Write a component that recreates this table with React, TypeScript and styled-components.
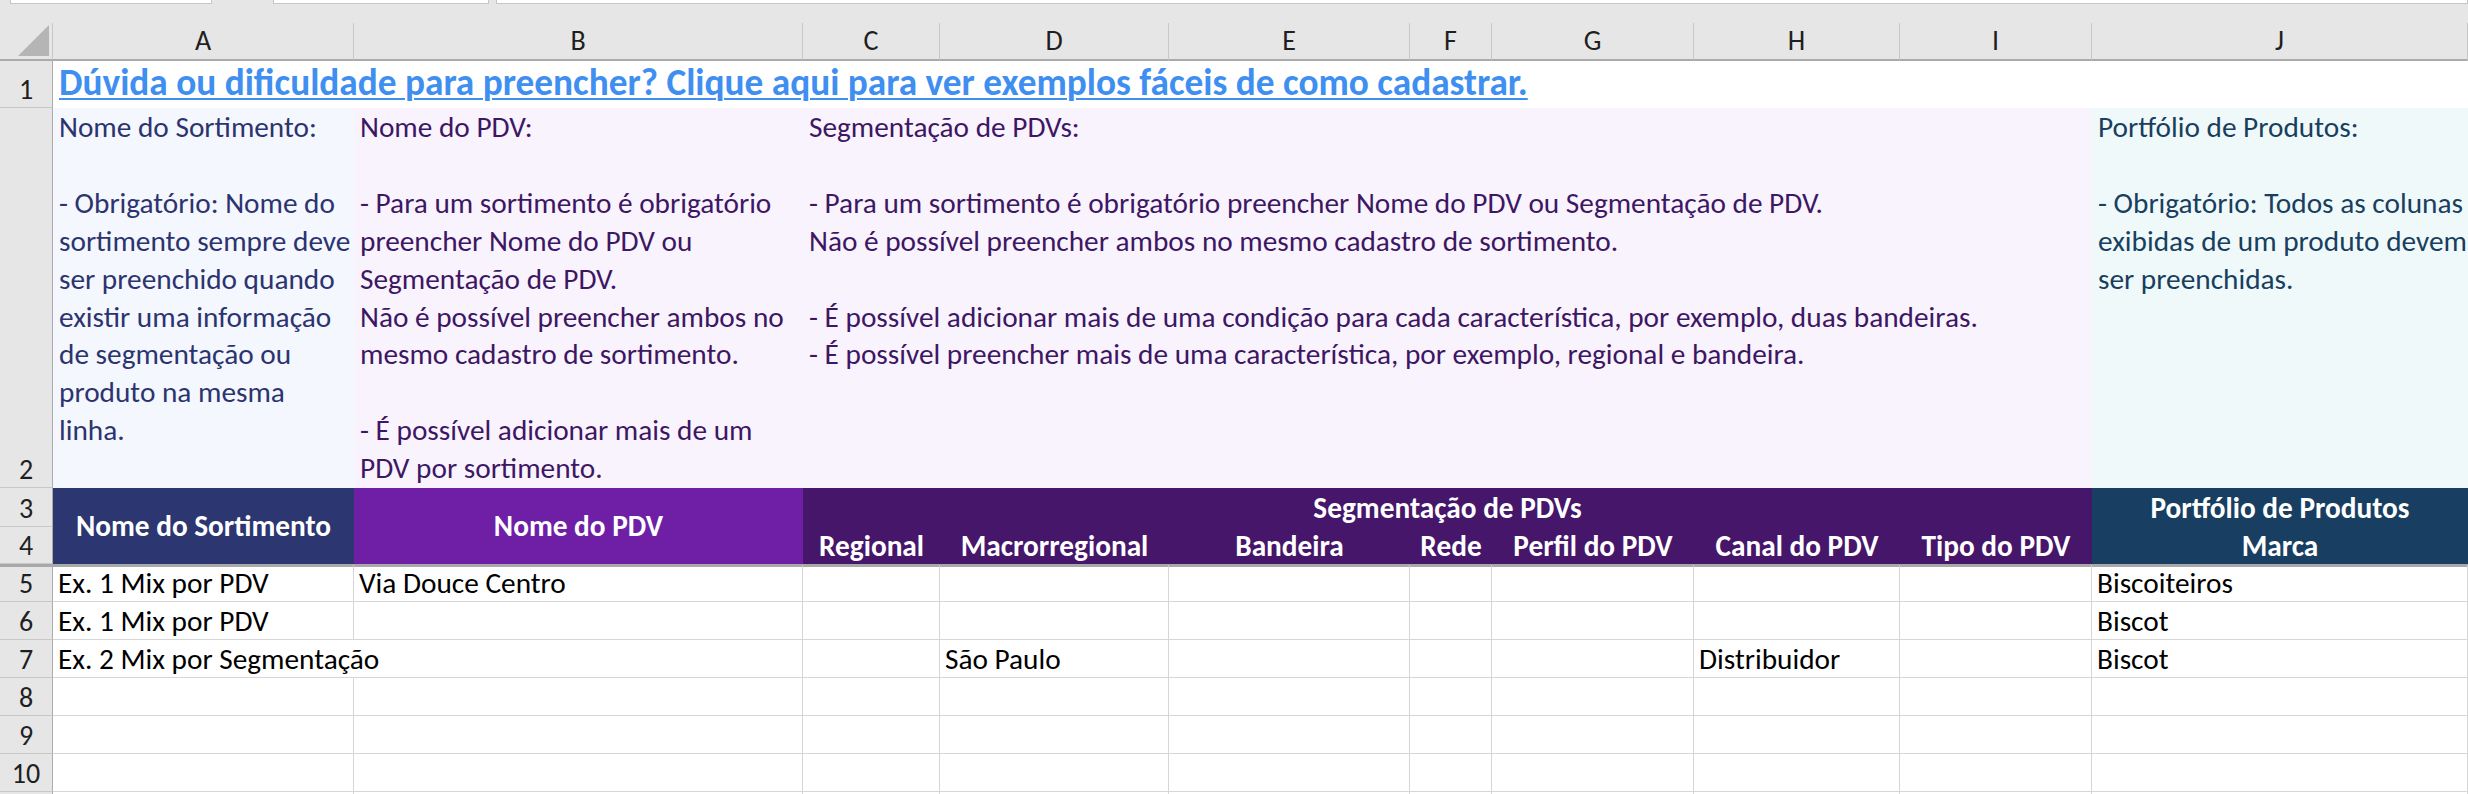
import React from 'react';
import styled, { createGlobalStyle } from 'styled-components';

const FONT = `Carlito, Lato, "Liberation Sans", sans-serif`;

const GlobalStyle = createGlobalStyle`
  *, *::before, *::after { box-sizing: border-box; }
  html, body { margin: 0; padding: 0; background: #e6e6e6; overflow: hidden; }
  body { font-family: ${FONT}; }
`;

// column widths: row header, A..J
const COLS = [53, 301, 449, 137, 229, 241, 82, 202, 206, 192, 376];
// strip, column header, rows 1..10, a sliver of row 11
const ROWS = [23, 38, 47, 380, 39, 37, 38, 38, 38, 38, 38, 38, 4];
const LETTERS = ['A', 'B', 'C', 'D', 'E', 'F', 'G', 'H', 'I', 'J'];

const Sheet = styled.div`
  display: grid;
  grid-template-columns: ${COLS.map((c) => `${c}px`).join(' ')};
  grid-template-rows: ${ROWS.map((r) => `${r}px`).join(' ')};
  width: 2468px;
  height: 794px;
  background: #ffffff;
  overflow: hidden;
  font-family: ${FONT};
`;

const TopStrip = styled.div`
  grid-column: 1 / -1;
  grid-row: 1;
  background: #e6e6e6;
  display: flex;
  align-items: flex-start;
`;

const Field = styled.div<{ $w: number; $gap: number }>`
  width: ${(p) => p.$w}px;
  margin-left: ${(p) => p.$gap}px;
  height: 4px;
  background: #ffffff;
  border: 1px solid #c6c6c6;
  border-top: none;
  flex: ${(p) => (p.$w === 0 ? 1 : 'none')};
`;

const Corner = styled.div`
  grid-column: 1;
  grid-row: 2;
  background: #e6e6e6;
  border-right: 1px solid #c8c8c8;
  border-bottom: 2px solid #ababab;
  display: flex;
  align-items: flex-end;
  justify-content: flex-end;
  padding: 0 3px 3px 0;
`;

const ColHead = styled.div<{ $c: number }>`
  grid-column: ${(p) => p.$c};
  grid-row: 2;
  background: #e6e6e6;
  border-right: 1px solid #c8c8c8;
  border-bottom: 2px solid #ababab;
  display: flex;
  align-items: flex-end;
  justify-content: center;
  padding-bottom: 4px;
  font-size: 28px;
  line-height: 1;
  color: #1f1f1f;
`;

const RowHead = styled.div<{ $r: number; $thick?: boolean }>`
  grid-column: 1;
  grid-row: ${(p) => p.$r};
  background: #e6e6e6;
  border-right: 1px solid #ababab;
  border-bottom: 1px solid #c8c8c8;
  border-top: ${(p) => (p.$thick ? '3px solid #a9a9a9' : 'none')};
  display: flex;
  align-items: flex-end;
  justify-content: center;
  padding-bottom: 3px;
  font-size: 28px;
  line-height: 1;
  color: #1f1f1f;
`;

const LinkCell = styled.div`
  grid-column: 2 / 12;
  grid-row: 3;
  background: #ffffff;
  display: flex;
  align-items: flex-end;
  padding: 0 0 5px 6px;
`;

const HelpLink = styled.a`
  font-size: 37.3px;
  font-weight: 700;
  color: #3f8ff0;
  text-decoration: underline;
  text-decoration-thickness: 2px;
  text-underline-offset: 3px;
  white-space: nowrap;
  line-height: 1.1;
  cursor: pointer;
`;

const NoteCell = styled.div<{ $c: string; $bg: string; $fg: string }>`
  grid-column: ${(p) => p.$c};
  grid-row: 4;
  background: ${(p) => p.$bg};
  color: ${(p) => p.$fg};
  white-space: pre;
  font-size: 29.3px;
  line-height: 37.9px;
  padding: 1px 6px 0;
  overflow: hidden;
`;

const HeadCell = styled.div<{ $c: string; $r: string; $bg: string }>`
  grid-column: ${(p) => p.$c};
  grid-row: ${(p) => p.$r};
  background: ${(p) => p.$bg};
  color: #ffffff;
  font-weight: 700;
  font-size: 29.3px;
  display: flex;
  align-items: center;
  justify-content: center;
  white-space: nowrap;
`;

const DataCell = styled.div<{ $c: number; $r: number; $open?: boolean; $thick?: boolean }>`
  grid-column: ${(p) => p.$c};
  grid-row: ${(p) => p.$r};
  border-right: ${(p) => (p.$open ? 'none' : '1px solid #d6d6d6')};
  border-bottom: 1px solid #d6d6d6;
  border-top: ${(p) => (p.$thick ? '3px solid #a9a9a9' : 'none')};
  display: flex;
  align-items: flex-end;
  padding: 0 5px 3px;
  font-size: 29.3px;
  line-height: 1;
  color: #000000;
  white-space: nowrap;
  overflow: visible;
`;

const notes = [
  {
    c: '2',
    bg: '#f4f7fd',
    fg: '#2c3470',
    text: 'Nome do Sortimento:\n\n- Obrigatório: Nome do\nsortimento sempre deve\nser preenchido quando\nexistir uma informação\nde segmentação ou\nproduto na mesma\nlinha.',
  },
  {
    c: '3',
    bg: '#f9f3fd',
    fg: '#3d1764',
    text: 'Nome do PDV:\n\n- Para um sortimento é obrigatório\npreencher Nome do PDV ou\nSegmentação de PDV.\nNão é possível preencher ambos no\nmesmo cadastro de sortimento.\n\n- É possível adicionar mais de um\nPDV por sortimento.',
  },
  {
    c: '4 / 11',
    bg: '#f9f3fd',
    fg: '#3d1764',
    text: 'Segmentação de PDVs:\n\n- Para um sortimento é obrigatório preencher Nome do PDV ou Segmentação de PDV.\nNão é possível preencher ambos no mesmo cadastro de sortimento.\n\n- É possível adicionar mais de uma condição para cada característica, por exemplo, duas bandeiras.\n- É possível preencher mais de uma característica, por exemplo, regional e bandeira.',
  },
  {
    c: '11',
    bg: '#f0f9fa',
    fg: '#183f5f',
    text: 'Portfólio de Produtos:\n\n- Obrigatório: Todos as colunas\nexibidas de um produto devem\nser preenchidas.',
  },
];

const segLabels = ['Regional', 'Macrorregional', 'Bandeira', 'Rede', 'Perfil do PDV', 'Canal do PDV', 'Tipo do PDV'];

// sheet rows 5..11, keyed by grid column (2 = A ... 11 = J)
const rows: Record<number, string>[] = [
  { 2: 'Ex. 1 Mix por PDV', 3: 'Via Douce Centro', 11: 'Biscoiteiros' },
  { 2: 'Ex. 1 Mix por PDV', 11: 'Biscot' },
  { 2: 'Ex. 2 Mix por Segmentação', 5: 'São Paulo', 9: 'Distribuidor', 11: 'Biscot' },
  {},
  {},
  {},
  {},
];

const LINK = 'Dúvida ou dificuldade para preencher? Clique aqui para ver exemplos fáceis de como cadastrar.';

function CornerMark() {
  return (
    <svg width="31" height="31" viewBox="0 0 31 31">
      <polygon points="31,0 31,31 0,31" fill="#b5b5b5" />
    </svg>
  );
}

export default function App() {
  return (
    <>
      <GlobalStyle />
      <Sheet>
        <TopStrip>
          <Field $w={202} $gap={10} />
          <Field $w={216} $gap={61} />
          <Field $w={0} $gap={7} />
        </TopStrip>

        <Corner>
          <CornerMark />
        </Corner>
        {LETTERS.map((l, i) => (
          <ColHead key={l} $c={i + 2}>
            {l}
          </ColHead>
        ))}

        {[1, 2, 3, 4, 5, 6, 7, 8, 9, 10, 11].map((n) => (
          <RowHead key={n} $r={n + 2} $thick={n === 5}>
            {n <= 10 ? n : ''}
          </RowHead>
        ))}

        <LinkCell>
          <HelpLink>{LINK}</HelpLink>
        </LinkCell>

        {notes.map((n) => (
          <NoteCell key={n.c} $c={n.c} $bg={n.bg} $fg={n.fg}>
            {n.text}
          </NoteCell>
        ))}

        <HeadCell $c="2" $r="5 / 7" $bg="#2c3670">Nome do Sortimento</HeadCell>
        <HeadCell $c="3" $r="5 / 7" $bg="#6e1fa6">Nome do PDV</HeadCell>
        <HeadCell $c="4 / 11" $r="5" $bg="#45166a">Segmentação de PDVs</HeadCell>
        {segLabels.map((s, i) => (
          <HeadCell key={s} $c={String(i + 4)} $r="6" $bg="#45166a">
            {s}
          </HeadCell>
        ))}
        <HeadCell $c="11" $r="5" $bg="#183f62">Portfólio de Produtos</HeadCell>
        <HeadCell $c="11" $r="6" $bg="#183f62">Marca</HeadCell>

        {rows.map((row, ri) =>
          Array.from({ length: 10 }, (_, ci) => {
            const c = ci + 2;
            const txt = row[c];
            // A7's text runs on into B7, so that cell keeps no right gridline
            const open = c === 2 && ri === 2;
            return (
              <DataCell key={`${ri}-${c}`} $c={c} $r={ri + 7} $open={open} $thick={ri === 0}>
                {txt}
              </DataCell>
            );
          })
        )}
      </Sheet>
    </>
  );
}
